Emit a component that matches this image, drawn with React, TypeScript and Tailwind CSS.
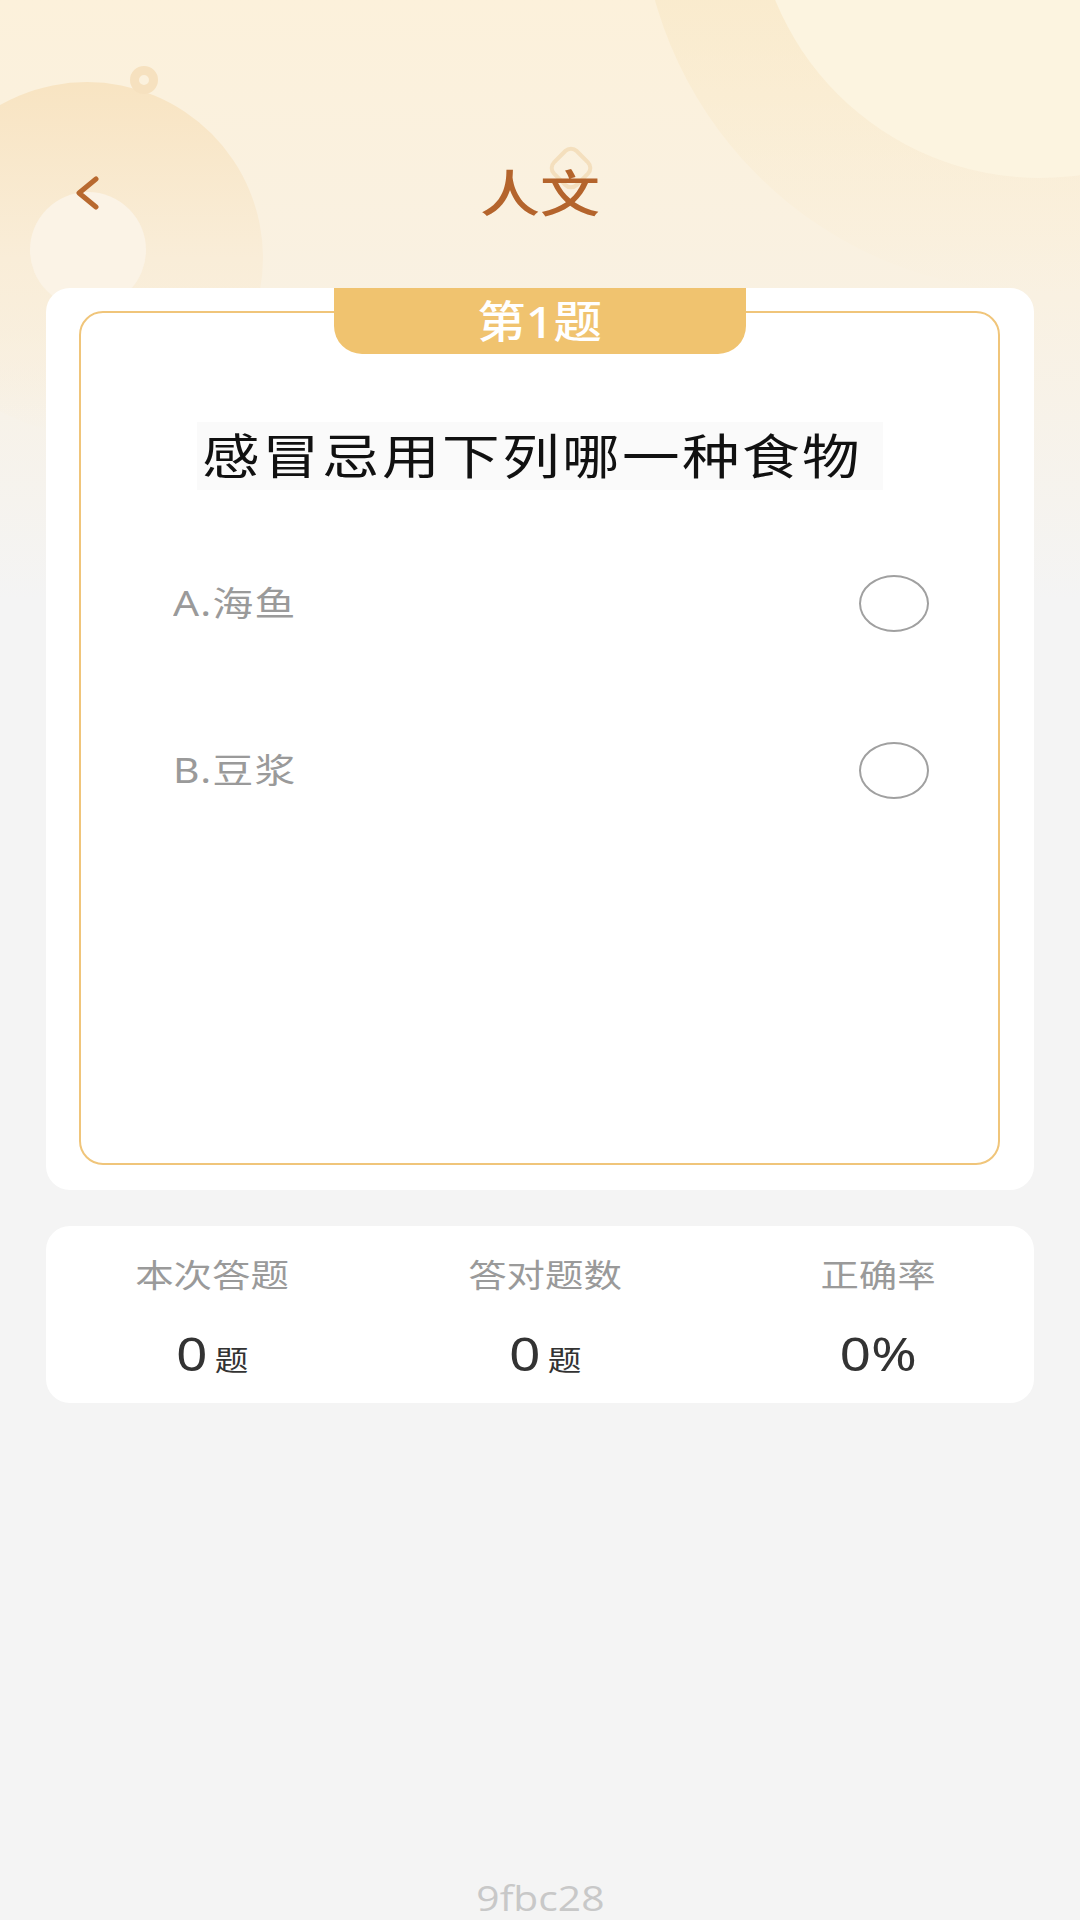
import React from "react";

const options = ["A.海鱼", "B.豆浆"];

const stats = [
  { label: "本次答题", value: "0", unit: "题" },
  { label: "答对题数", value: "0", unit: "题" },
  { label: "正确率", value: "0%", unit: "" },
];

function Decorations() {
  return (
    <div className="absolute inset-0 z-0 pointer-events-none">
      <div className="absolute left-0 top-0 w-full h-[600px] bg-linear-to-b from-[#fcf1db] via-[#f9f1e2] to-[#f4f4f4]" />
      {/* right ring */}
      <div className="absolute left-[640px] top-[-508px] w-[800px] h-[800px] rounded-full bg-linear-to-b from-[#f8e1b0] via-[#f9e9c9] to-[#fbf2df]/0" />
      <div className="absolute left-[754px] top-[-394px] w-[572px] h-[572px] rounded-full bg-[#fcf4e0]" />
      {/* left blob */}
      <div className="absolute left-[-89px] top-[82px] w-[352px] h-[352px] rounded-full bg-linear-to-b from-[#f8e4c2] via-[#f9edd8] to-[#f7f2ea]/0" />
      <div className="absolute left-[30px] top-[192px] w-[116px] h-[116px] rounded-full bg-[#fbf3e6]" />
      <div className="absolute left-[130px] top-[66px] w-[28px] h-[28px] rounded-full border-[9px] border-[#f6e1bf]" />
      {/* drop behind title */}
      <div className="absolute left-[553px] top-[150px] w-[36px] h-[36px] rotate-45 rounded-[10px] border-4 border-[#f4dfbd]" />
    </div>
  );
}

export default function App() {
  return (
    <div className="relative w-[1080px] h-[1920px] overflow-hidden bg-[#f4f4f4] flex flex-col font-['Noto_Sans','Noto_Sans_CJK_SC',sans-serif]">
      <Decorations />

      <header className="relative z-10 mt-[149px] h-[88px] grid grid-cols-[1fr_auto_1fr] items-center">
        <div className="pl-[75px]">
          <svg width="24" height="34" viewBox="0 0 24 34" fill="none">
            <polyline points="21,3 4,17 21,31" stroke="#b8692f" strokeWidth="5" strokeLinecap="round" strokeLinejoin="round" />
          </svg>
        </div>
        <h1 className="inline-block scale-x-[1.2] text-[50px] leading-none font-medium text-[#b4642c]">人文</h1>
        <div />
      </header>

      <section className="relative z-10 mx-[46px] mt-[51px] h-[902px] rounded-[24px] bg-white pt-[23px] pb-[25px] pl-[33px] pr-[34px]">
        <div className="absolute left-1/2 top-0 -translate-x-1/2 w-[412px] h-[66px] rounded-b-[28px] bg-[#f0c36f] flex items-center justify-center">
          <span className="inline-block scale-x-[1.1] text-[44px] leading-none font-medium text-white">第1题</span>
        </div>
        <div className="h-full rounded-[24px] border-2 border-[#f0c57a] pt-[109px]">
          <div className="flex justify-center">
            <p className="h-[68px] w-[686px] pr-[14px] flex items-center justify-center bg-[#fafafa]">
              <span className="inline-block scale-x-[1.2] text-[48px] tracking-[2px] text-[#111]">感冒忌用下列哪一种食物</span>
            </p>
          </div>
          <div className="mt-[30px] pl-[92px] pr-[69px]">
            {options.map((o) => (
              <div key={o} className="h-[167px] flex items-center justify-between">
                <span className="inline-block origin-left scale-x-[1.2] text-[34px] tracking-[1px] text-[#9a9a9a]">{o}</span>
                <span className="w-[70px] h-[57px] rounded-[50%] border-2 border-[#a0a0a0]" />
              </div>
            ))}
          </div>
        </div>
      </section>

      <section className="relative z-10 mx-[46px] mt-[36px] h-[177px] rounded-[24px] bg-white grid grid-cols-[repeat(3,333px)] pt-[29px]">
        {stats.map((s) => (
          <div key={s.label} className="flex flex-col items-center">
            <span className="inline-block scale-x-[1.2] text-[32px] leading-[40px] text-[#9a9a9a]">{s.label}</span>
            <div className="mt-[30px] h-[56px] flex items-baseline scale-x-[1.2]">
              <span className="text-[46px] leading-[56px] text-[#333]">{s.value}</span>
              {s.unit && <span className="ml-[6px] text-[28px] text-[#333]">{s.unit}</span>}
            </div>
          </div>
        ))}
      </section>

      <footer className="relative z-10 mt-auto h-[45px] flex items-center justify-center">
        <span className="inline-block scale-x-[1.2] text-[34px] leading-none text-[#c8c8c8] font-['Open_Sans',sans-serif]">9fbc28</span>
      </footer>
    </div>
  );
}
